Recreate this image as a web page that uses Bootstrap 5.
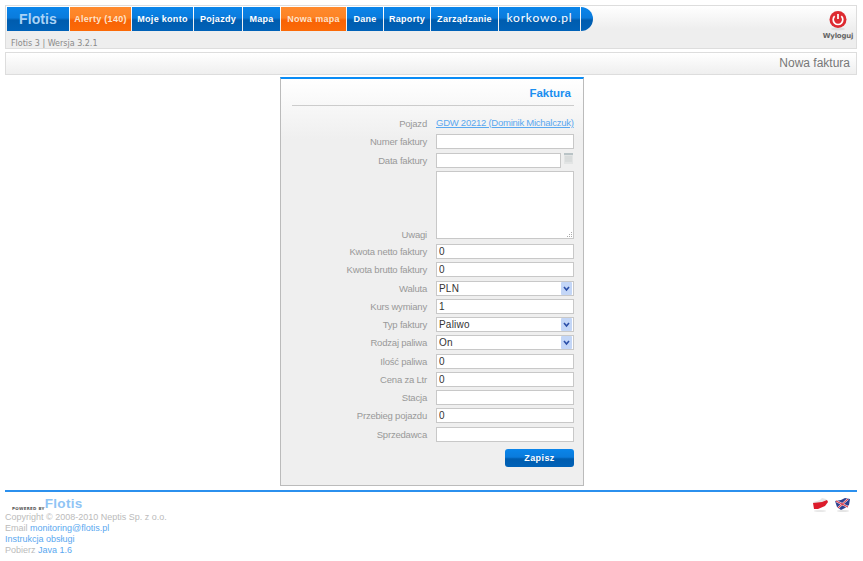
<!DOCTYPE html>
<html lang="pl">
<head>
    <meta charset="UTF-8">
    <meta name="viewport" content="width=device-width, initial-scale=1.0">
    <title>Nowa faktura - Flotis</title>
    <link href="https://cdn.jsdelivr.net/npm/bootstrap@5.3.0/dist/css/bootstrap.min.css" rel="stylesheet">
    <script src="https://cdn.jsdelivr.net/npm/bootstrap@5.3.0/dist/js/bootstrap.bundle.min.js"></script>
    <style>
        body { font-family: "Liberation Sans", Arial, sans-serif; font-size: 9px; color: #bbb; background: #fff; padding: 5px 6px 0 5px; }
        a { color: #5aa8f0; text-decoration: none; }
        .top-box { height: 44px; border: 1px solid #ddd; background: linear-gradient(#fff, #eee 55%); position: relative; }
        .top-nav { margin: 1px 0 0 1px; height: 24px; }
        .top-nav a { display: flex; align-items: center; justify-content: center; height: 24px; margin-right: 1px; color: #fff; font: bold 9px "Liberation Sans", sans-serif; letter-spacing: .3px; background: linear-gradient(#0a85ea, #0a7bdc 45%, #005cae 55%, #0062b8); }
        .top-nav a.nav-orange { background: linear-gradient(#ff8a2e, #fd8325 45%, #f86305 55%, #fb6a08); color: #fde3cc; }
        .top-nav a.nav-brand { width: 62px; margin-right: 1px; font: bold 14px "Liberation Sans", sans-serif; color: #a9d3f7; letter-spacing: .1px; }
        .top-nav a.nav-logo { font: 400 12px "Lato", sans-serif; letter-spacing: .8px; padding-bottom: 4px; }
        .top-nav a.nav-cap { width: 12px; border-radius: 0 12px 12px 0; }
        .version-txt { margin: 8px 0 0 5px; font: 8px "DejaVu Sans", sans-serif; color: #8a8a8a; }
        .logout-box { position: absolute; right: 2px; top: 5px; width: 32px; text-align: center; font: bold 7px "DejaVu Sans", sans-serif; color: #666; letter-spacing: -.2px; }
        .logout-box svg { display: block; margin: 0 auto 1px; }
        .title-box { height: 23px; margin-top: 3px; border: 1px solid #ddd; background: linear-gradient(#fff, #efefef); padding-right: 6px; font: 12px/21px "Liberation Sans", sans-serif; color: #777; text-align: right; }
        .invoice-card { width: 304px; height: 409px; margin: 2px auto 0; padding: 0 9px 0 11px; border: 1px solid #bbb; border-top: 2px solid #0a8cf5; background: linear-gradient(#fff, #efefef 60px); position: relative; left: 1px; }
        .invoice-head { height: 27px; margin-bottom: 8px; padding: 8px 3px 0 0; border-bottom: 1px solid #ccc; font: bold 11.5px "Liberation Sans", sans-serif; color: #1b8ff0; text-align: right; }
        .form-line { display: flex; margin-bottom: 3.25px; min-height: 15px; }
        .form-line label { width: 135px; margin: 0 9px 0 0; text-align: right; color: #999; font-size: 9.5px; letter-spacing: -.2px; line-height: 15px; align-self: flex-end; }
        .form-line .note-label { margin-bottom: -1px; }
        .form-line .field-w { width: 138px; }
        .vehicle-link { padding-top: 1px; line-height: 16px; font-size: 9.5px; letter-spacing: -.25px; text-decoration: underline; }
        .form-line .form-control, .form-line .form-select { height: 15px; min-height: 0; padding: 0 2px; border: 1px solid #c8c8c8; border-radius: 0; font: 10px "Liberation Sans", sans-serif; color: #333; letter-spacing: .2px; box-shadow: none; }
        .form-line textarea.form-control { height: 68px; display: block; margin-bottom: 2px; resize: none; background: #fff url("data:image/svg+xml,%3Csvg xmlns='http://www.w3.org/2000/svg' width='7' height='7'%3E%3Cpath d='M5 1h1v1H5zM3 3h1v1H3zM5 3h1v1H5zM1 5h1v1H1zM3 5h1v1H3zM5 5h1v1H5z' fill='%23aaa'/%3E%3C/svg%3E") no-repeat right bottom; }
        .form-line .form-select { background-image: url("data:image/svg+xml,%3Csvg xmlns='http://www.w3.org/2000/svg' width='11' height='13'%3E%3Crect width='11' height='13' rx='1' fill='%23c3d6f7'/%3E%3Cpath d='M3 5l2.5 3L8 5' fill='none' stroke='%232b4fa8' stroke-width='1.6'/%3E%3C/svg%3E"); background-position: right 1px center; background-size: 11px 13px; background-repeat: no-repeat; }
        .form-line .date-input { width: 125px; }
        .calendar-ico { display: block; margin: 0 0 0 3px; }
        .save-btn { width: 69px; height: 18px; padding: 0; margin: 4px 0 0 213px; border: 0; border-radius: 3px; color: #fff; font: bold 9px "Liberation Sans", sans-serif; letter-spacing: .4px; background: linear-gradient(#0a85ea, #0a7bdc 45%, #005cae 55%, #0062b8); }
        .foot-box { margin-top: 4px; padding-top: 5px; border-top: 2px solid #2b90ee; position: relative; line-height: 11px; }
        .powered-txt { height: 15px; margin: -1px 0 1px 7px; display: flex; align-items: flex-end; font: bold 4px "DejaVu Sans", sans-serif; color: #555; letter-spacing: .3px; }
        .powered-txt b { margin-left: 0; font: bold 13.5px/15px "Liberation Sans", sans-serif; color: #8fc4f5; }
        .flag-row { position: absolute; right: 6px; top: 5px; gap: 5px; }
    </style>
</head>
<body>
    <div class="top-box">
        <nav class="top-nav d-flex">
            <a class="nav-brand" href="#">Flotis</a>
            <a class="nav-orange" href="#" style="width: 61px">Alerty (140)</a>
            <a href="#" style="width: 61px">Moje konto</a>
            <a href="#" style="width: 48px">Pojazdy</a>
            <a href="#" style="width: 37px">Mapa</a>
            <a class="nav-orange" href="#" style="width: 65px">Nowa mapa</a>
            <a href="#" style="width: 36px">Dane</a>
            <a href="#" style="width: 46px">Raporty</a>
            <a href="#" style="width: 67px">Zarządzanie</a>
            <a class="nav-logo" href="#" style="width: 81px">korkowo.pl</a>
            <a class="nav-cap" href="#"></a>
        </nav>
        <div class="version-txt">Flotis 3 | Wersja 3.2.1</div>
        <div class="logout-box">
            <svg width="18" height="20" viewBox="0 0 18 20">
                <ellipse cx="9" cy="18" rx="7" ry="1.5" fill="#ddd"/>
                <circle cx="9" cy="8.5" r="8.5" fill="#dd2a30"/>
                <path d="M5.7 5.2a4.8 4.8 0 1 0 6.6 0" fill="none" stroke="#fff" stroke-width="1.7"/>
                <path d="M9 3v5" stroke="#fff" stroke-width="1.7"/>
            </svg>
            Wyloguj
        </div>
    </div>
    <div class="title-box">Nowa faktura</div>

    <form class="invoice-card">
        <div class="invoice-head">Faktura</div>
        <div class="form-line"><label>Pojazd</label><a class="field-w text-nowrap vehicle-link" href="#">GDW 20212 (Dominik Michalczuk)</a></div>
        <div class="form-line"><label>Numer faktury</label><div class="field-w"><input class="form-control" type="text"></div></div>
        <div class="form-line"><label>Data faktury</label><div class="field-w d-flex">
            <input class="form-control date-input" type="text">
            <svg class="calendar-ico" width="9" height="11" viewBox="0 0 9 11"><rect width="9" height="11" fill="#e2e4e4"/><rect width="9" height="2" fill="#b9c3c6"/><path d="M1 4h7M1 6h7M1 8h7" stroke="#cfd3d3"/></svg>
        </div></div>
        <div class="form-line"><label class="note-label">Uwagi</label><div class="field-w"><textarea class="form-control"></textarea></div></div>
        <div class="form-line"><label>Kwota netto faktury</label><div class="field-w"><input class="form-control" type="text" value="0"></div></div>
        <div class="form-line"><label>Kwota brutto faktury</label><div class="field-w"><input class="form-control" type="text" value="0"></div></div>
        <div class="form-line"><label>Waluta</label><div class="field-w"><select class="form-select"><option>PLN</option></select></div></div>
        <div class="form-line"><label>Kurs wymiany</label><div class="field-w"><input class="form-control" type="text" value="1"></div></div>
        <div class="form-line"><label>Typ faktury</label><div class="field-w"><select class="form-select"><option>Paliwo</option></select></div></div>
        <div class="form-line"><label>Rodzaj paliwa</label><div class="field-w"><select class="form-select"><option>On</option></select></div></div>
        <div class="form-line"><label>Ilość paliwa</label><div class="field-w"><input class="form-control" type="text" value="0"></div></div>
        <div class="form-line"><label>Cena za Ltr</label><div class="field-w"><input class="form-control" type="text" value="0"></div></div>
        <div class="form-line"><label>Stacja</label><div class="field-w"><input class="form-control" type="text"></div></div>
        <div class="form-line"><label>Przebieg pojazdu</label><div class="field-w"><input class="form-control" type="text" value="0"></div></div>
        <div class="form-line"><label>Sprzedawca</label><div class="field-w"><input class="form-control" type="text"></div></div>
        <button class="btn save-btn" type="button">Zapisz</button>
    </form>

    <footer class="foot-box">
        <div class="powered-txt">POWERED BY<b>Flotis</b></div>
        <div>Copyright © 2008-2010 Neptis Sp. z o.o.</div>
        <div>Email <a href="#">monitoring@flotis.pl</a></div>
        <div><a href="#">Instrukcja obsługi</a></div>
        <div>Pobierz <a href="#">Java 1.6</a></div>
        <div class="flag-row d-flex">
            <svg width="17" height="15" viewBox="0 0 17 15">
                <ellipse cx="8" cy="14" rx="6" ry="1" fill="#e8e8e8"/>
                <path d="M1 5l4-1 3-1 2-2 4 1 2 3-7 3-6 2z" fill="#e6e6e6"/>
                <path d="M1 6l9-1 5-2 1 2-3 4-7 3-4 0z" fill="#dc1c2c"/>
            </svg>
            <svg width="17" height="15" viewBox="0 0 17 15">
                <ellipse cx="9" cy="14" rx="6" ry="1" fill="#e4e4e4"/>
                <path d="M1 4l6-1 4-2 5 1-1 6-4 3-4 2-4-3z" fill="#2d3f8f"/>
                <path d="M2 4l12 6M14 2L4 11" stroke="#eed8dc" stroke-width="2"/>
                <path d="M2 4l12 6M14 2L4 11" stroke="#d8283c"/>
            </svg>
        </div>
    </footer>
</body>
</html>
